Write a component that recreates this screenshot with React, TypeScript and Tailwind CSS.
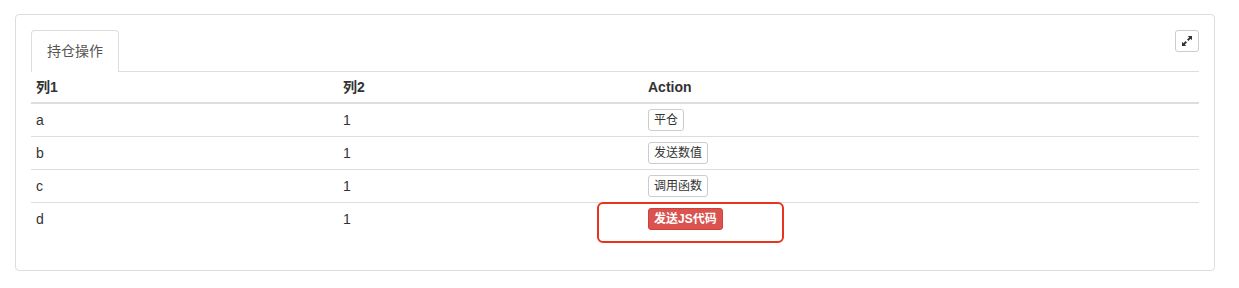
import React from "react";

const rows = [
  { c1: "a", c2: "1", action: "平仓" },
  { c1: "b", c2: "1", action: "发送数值" },
  { c1: "c", c2: "1", action: "调用函数" },
  { c1: "d", c2: "1", action: "发送JS代码", danger: true },
];

const ExpandIcon = () => (
  <svg width="10" height="10" viewBox="0 0 10 10" fill="#333">
    <path d="M10 0 L10 4.2 L8.6 2.8 L6.4 5 L5 3.6 L7.2 1.4 L5.8 0 Z" />
    <path d="M0 10 L0 5.8 L1.4 7.2 L3.6 5 L5 6.4 L2.8 8.6 L4.2 10 Z" />
  </svg>
);

export default function App() {
  return (
    <div
      className="bg-white w-[1239px] h-[288px] pt-[14px] pl-[15px] text-[#333]"
      style={{ fontFamily: '"Liberation Sans", "Noto Sans CJK SC", sans-serif' }}
    >
      <div className="relative w-[1200px] h-[257px] border border-[#ddd] rounded-[4px] px-[15px] pt-[15px]">
        <div className="flex justify-between items-start border-b border-[#ddd]">
          <div className="-mb-px px-[15px] h-[42px] leading-[41px] text-[14px] text-[#555] bg-white border border-b-0 border-[#ddd] rounded-t-[4px]">
            持仓操作
          </div>
          <button className="w-[24px] h-[22px] flex items-center justify-center border border-[#ccc] rounded-[3px] bg-white">
            <ExpandIcon />
          </button>
        </div>

        <table className="w-[1168px] table-fixed border-collapse text-[14px]">
          <colgroup>
            <col className="w-[307px]" />
            <col className="w-[305px]" />
            <col />
          </colgroup>
          <thead>
            <tr className="border-b-2 border-[#ddd]">
              <th className="text-left font-bold px-[5px] py-[5px] leading-[20px]">列1</th>
              <th className="text-left font-bold px-[5px] py-[5px] leading-[20px]">列2</th>
              <th className="text-left font-bold px-[5px] py-[5px] leading-[20px]">Action</th>
            </tr>
          </thead>
          <tbody>
            {rows.map((r, i) => (
              <tr key={r.c1} className={i > 0 ? "border-t border-[#ddd]" : ""}>
                <td className="px-[5px] py-[5px] leading-[22px] align-top">{r.c1}</td>
                <td className="px-[5px] py-[5px] leading-[22px] align-top">{r.c2}</td>
                <td className="px-[5px] py-[5px] align-top">
                  {r.danger ? (
                    <button className="h-[22px] px-[5px] text-[12px] leading-[20px] font-bold text-white bg-[#d9534f] border border-[#d43f3a] rounded-[3px]">
                      {r.action}
                    </button>
                  ) : (
                    <button className="h-[22px] px-[5px] text-[12px] leading-[20px] text-[#333] bg-white border border-[#ccc] rounded-[3px]">
                      {r.action}
                    </button>
                  )}
                </td>
              </tr>
            ))}
          </tbody>
        </table>

        <div className="absolute left-[581px] top-[187px] w-[187px] h-[41px] border-2 border-[#e8341c] rounded-[6px] pointer-events-none" />
      </div>
    </div>
  );
}
